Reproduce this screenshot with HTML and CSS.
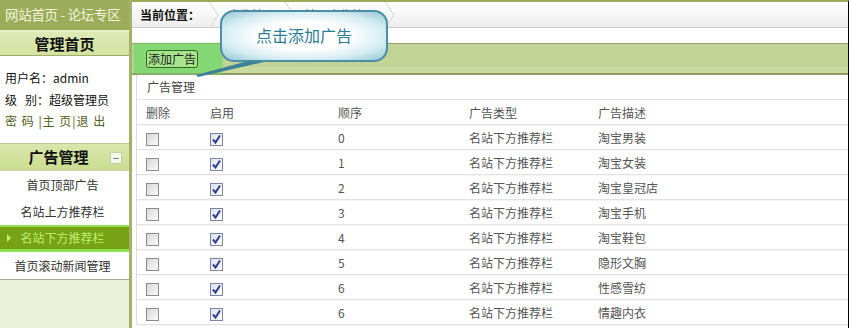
FILE: index.html
```html
<!DOCTYPE html>
<html lang="zh-CN">
<head>
  <meta charset="UTF-8" />
  <title>广告管理</title>
  <link rel="stylesheet" href="styles.css">
</head>
<body>

<div class="page">
  <div class="sidebar">
    <div class="site-head">网站首页 - 论坛专区</div>
    <div class="sb-title">管理首页</div>
    <div class="user-info">
      <p>用户名：admin</p>
      <p>级<span class="gap"></span>别：超级管理员</p>
      <p class="links">密 码 |主 页|退 出</p>
    </div>
    <div class="section-head">广告管理<span class="fold">−</span></div>
    <ul class="menu">
      <li>首页顶部广告</li>
      <li>名站上方推荐栏</li>
      <li class="active">名站下方推荐栏</li>
      <li>首页滚动新闻管理</li>
    </ul>
    <div class="sb-fill"></div>
  </div>

  <div class="main">
    <div class="crumbs">
      <span class="here">当前位置：</span>
      <svg class="sep" width="12" height="26" viewBox="0 0 12 26"><polyline points="1,0 10,13 1,26" fill="none" stroke="#d4d4d4" stroke-width="1"/></svg>
      <span>广告管理</span>
      <svg class="sep" width="12" height="26" viewBox="0 0 12 26"><polyline points="1,0 10,13 1,26" fill="none" stroke="#d4d4d4" stroke-width="1"/></svg>
      <span>首页广告管理</span>
      <svg class="sep" width="12" height="26" viewBox="0 0 12 26"><polyline points="1,0 10,13 1,26" fill="none" stroke="#d4d4d4" stroke-width="1"/></svg>
    </div>

    <div class="toolbar">
      <div class="glow"><button class="add-btn">添加广告</button></div>
    </div>

    <div class="list">
      <div class="list-title">广告管理</div>
      <table class="ads">
        <thead>
          <tr><td class="c1">删除</td><td class="c2">启用</td><td class="c3">顺序</td><td class="c4">广告类型</td><td>广告描述</td></tr>
        </thead>
        <tbody id="rows"></tbody>
      </table>
    </div>

    <div class="callout">
      <div class="bubble">点击添加广告</div>
      <svg class="tail" width="70" height="20" viewBox="0 0 70 20">
        <polygon points="0,17 52,3 68,4 2,19" fill="#3d8198"/>
      </svg>
    </div>
  </div>
</div>

<script>
  const ads = [
    { order: 0, type: "名站下方推荐栏", desc: "淘宝男装" },
    { order: 1, type: "名站下方推荐栏", desc: "淘宝女装" },
    { order: 2, type: "名站下方推荐栏", desc: "淘宝皇冠店" },
    { order: 3, type: "名站下方推荐栏", desc: "淘宝手机" },
    { order: 4, type: "名站下方推荐栏", desc: "淘宝鞋包" },
    { order: 5, type: "名站下方推荐栏", desc: "隐形文胸" },
    { order: 6, type: "名站下方推荐栏", desc: "性感雪纺" },
    { order: 6, type: "名站下方推荐栏", desc: "情趣内衣" }
  ];

  const check = '<svg width="11" height="11" viewBox="0 0 11 11"><path d="M2 5.5 L4.5 8.5 L9 1.5" fill="none" stroke="#2e3f96" stroke-width="2"/></svg>';

  const tbody = document.getElementById('rows');
  ads.forEach(ad => {
    const tr = document.createElement('tr');
    tr.innerHTML = `
      <td><span class="cb"></span></td>
      <td><span class="cb on">${check}</span></td>
      <td>${ad.order}</td>
      <td>${ad.type}</td>
      <td>${ad.desc}</td>
    `;
    tbody.appendChild(tr);
  });
</script>

</body>
</html>
```

FILE: styles.css
```css
body {
  margin: 0;
  font-family: "Noto Sans CJK SC", "Liberation Sans", sans-serif;
  font-size: 12px;
  color: #333;
  background: #fff;
  overflow: hidden;
}
.page {
  display: flex;
  width: 849px;
  height: 328px;
  overflow: hidden;
}

/* sidebar */
.sidebar {
  width: 129px;
  flex: none;
  display: flex;
  flex-direction: column;
  border-right: 3px solid #a3b26a;
  background: #fff;
}
.site-head {
  height: 30px;
  line-height: 29px;
  padding-left: 5px;
  background: #9dac5a;
  color: #f0f5dc;
  font-size: 13.5px;
  letter-spacing: -0.3px;
  white-space: nowrap;
}
.sb-title {
  height: 23px;
  line-height: 23px;
  border-top: 2px solid #e8f1c8;
  border-bottom: 1px solid #9eae6a;
  background: linear-gradient(#dfeab6, #d3e2a0);
  text-align: center;
  font-size: 15px;
  font-weight: bold;
  color: #111;
}
.user-info {
  padding: 11px 0 11px 5px;
  height: 65px;
}
.user-info p {
  margin: 0;
  height: 21.5px;
  line-height: 21.5px;
  color: #111;
  white-space: nowrap;
}
.user-info .gap {
  display: inline-block;
  width: 8px;
}
.user-info .links {
  color: #506020;
  letter-spacing: 1px;
}
.section-head {
  position: relative;
  height: 26px;
  line-height: 26px;
  border-top: 1px solid #b9c990;
  border-bottom: 1px solid #c9d7a6;
  background: linear-gradient(#d9e7aa, #cbdd92);
  text-align: center;
  font-size: 15px;
  font-weight: bold;
  color: #111;
  padding-right: 12px;
}
.fold {
  position: absolute;
  right: 7px;
  top: 8px;
  width: 10px;
  height: 10px;
  line-height: 9px;
  font-size: 10px;
  text-align: center;
  background: #f4f7ea;
  border: 1px solid #c2cfa0;
  color: #777;
}
.menu {
  list-style: none;
  margin: 0;
  padding: 0;
}
.menu li {
  height: 27px;
  line-height: 27px;
  text-align: center;
  color: #333;
  white-space: nowrap;
  padding-right: 4px;
}
.menu li.active {
  position: relative;
  height: 22px;
  line-height: 22px;
  border-top: 2px solid #8fe050;
  border-bottom: 3px solid #8fe050;
  background: #78a215;
  color: #b8f070;
}
.menu li.active::before {
  content: "";
  position: absolute;
  left: 7px;
  top: 7px;
  border-left: 4px solid #b8f070;
  border-top: 4px solid transparent;
  border-bottom: 4px solid transparent;
}
.menu li:last-child {
  border-bottom: 1px solid #a8a890;
}
.sb-fill {
  flex: 1;
  background: #ebf1d9;
}

/* main */
.main {
  position: relative;
  flex: 1;
  border-right: 1px solid #000;
  border-top: 2px solid #9dac5a;
}
.crumbs {
  height: 25px;
  display: flex;
  align-items: center;
  gap: 4px;
  padding-left: 8px;
  background: linear-gradient(#ffffff, #eeeeee);
  border-bottom: 1px solid #cfcfcf;
  color: #666;
}
.crumbs .here {
  color: #111;
  font-weight: bold;
}
.crumbs .sep {
  margin: 0 4px;
}
.toolbar {
  margin-top: 15px;
  height: 29px;
  border-top: 1px solid #8e9e64;
  border-bottom: 2px solid #8e9e64;
  background: linear-gradient(#c1d495 80%, #c8da9e 80%);
  padding-left: 2px;
}
.glow {
  display: inline-flex;
  align-items: center;
  height: 29px;
  padding: 0 24px 0 12px;
  background: #84d874;
  box-shadow: 0 0 3px #84d874;
}
.add-btn {
  font-family: inherit;
  font-size: 12px;
  padding: 0 1px;
  height: 18px;
  line-height: 16px;
  color: #222;
  background: #a6e38c;
  border: 1px solid #2e6a1e;
  border-radius: 3px;
}
.list {
  margin-left: 4px;
  border-left: 1px solid #dedede;
}
.list-title {
  height: 24px;
  line-height: 24px;
  padding-left: 10px;
  border-bottom: 1px solid #e4e4e4;
  color: #444;
}
.ads {
  width: 100%;
  border-collapse: collapse;
  color: #555;
}
.ads td {
  height: 24px;
  padding: 0 0 0 9px;
  border-bottom: 1px solid #e2e2e2;
  box-shadow: 0 1px 0 #f6f6f6;
  white-space: nowrap;
}
.ads .c1 { width: 55px; }
.ads .c2 { width: 119px; }
.ads .c3 { width: 122px; }
.ads .c4 { width: 120px; }
.cb {
  display: inline-block;
  vertical-align: middle;
  width: 11px;
  height: 11px;
  border: 1px solid #8b8b8b;
  background: linear-gradient(135deg, #d8d8d8, #fafafa);
}
.cb.on {
  border-color: #7b85a8;
  background: linear-gradient(135deg, #dcdfee, #ffffff);
}
.cb svg {
  display: block;
}

/* callout */
.callout {
  position: absolute;
  left: 88px;
  top: 8px;
}
.bubble {
  box-sizing: border-box;
  width: 168px;
  height: 52px;
  line-height: 46px;
  text-align: center;
  font-size: 16px;
  color: #2a7c92;
  border: 2px solid #4a8fa5;
  border-radius: 14px;
  background: radial-gradient(ellipse at center, #ffffff 40%, #d6edf3 70%, #94c4d4 100%);
}
.tail {
  position: absolute;
  left: -24px;
  top: 48px;
}
```
